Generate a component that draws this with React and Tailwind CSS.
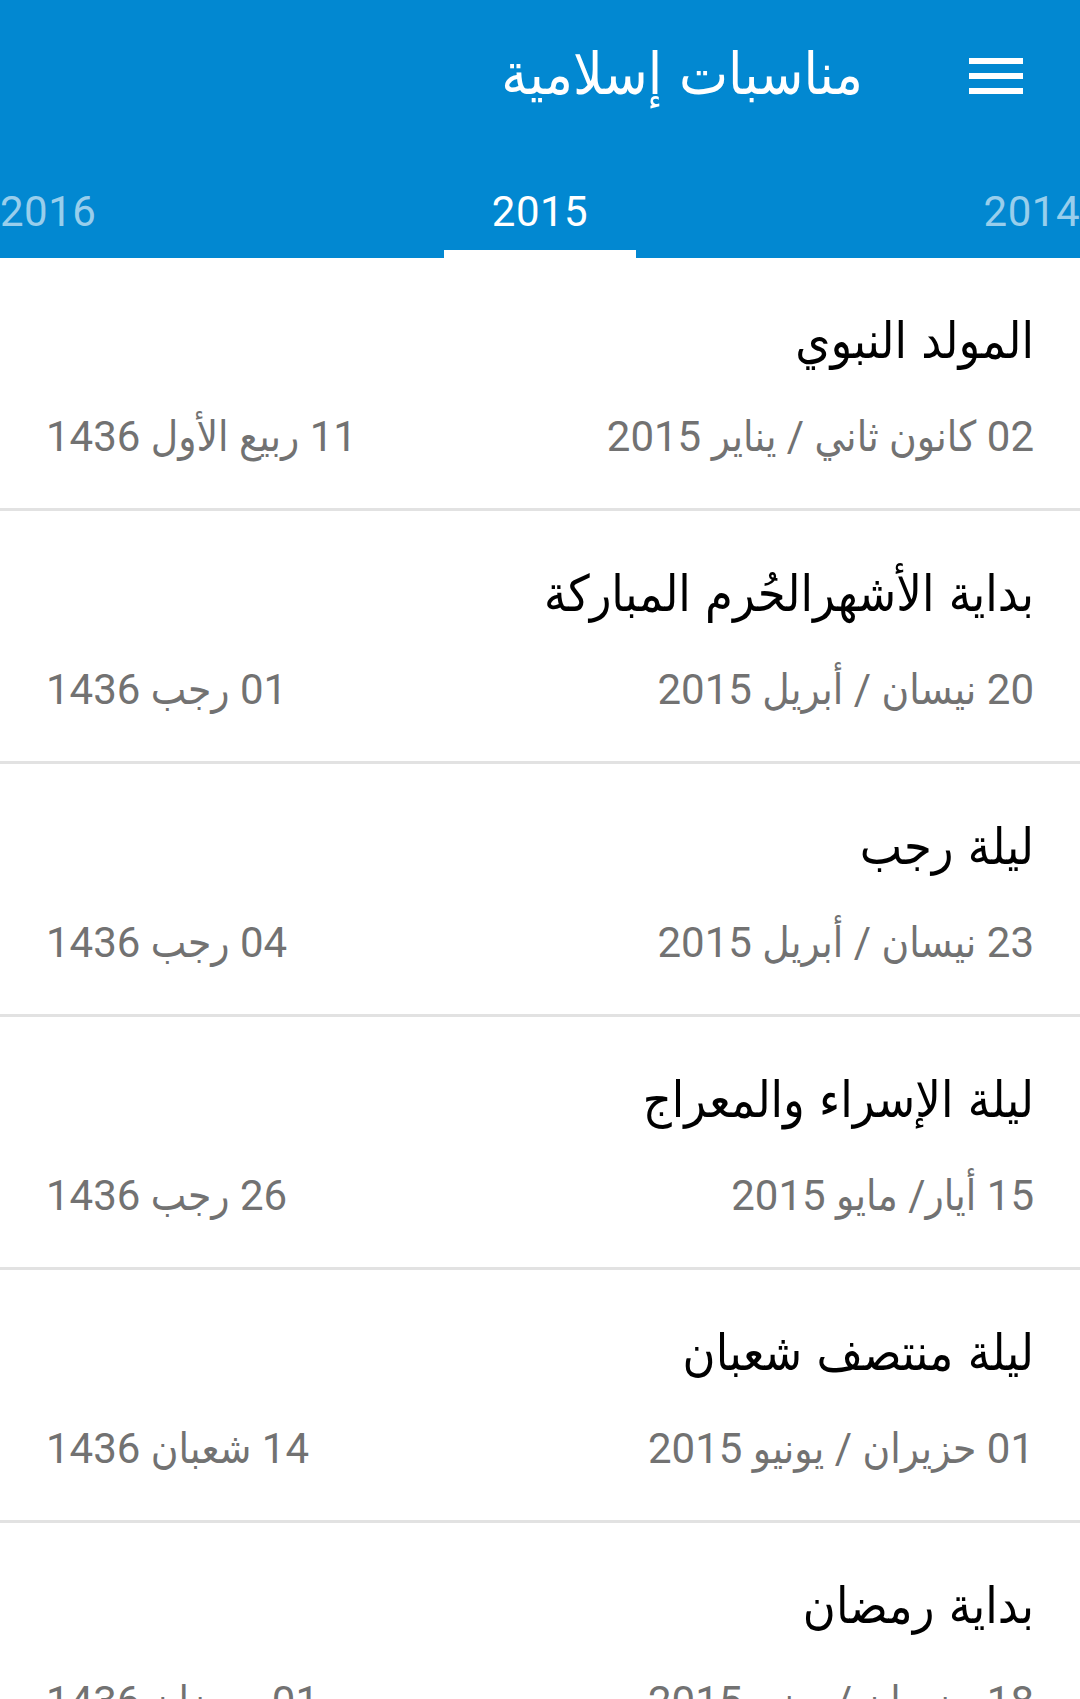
const events = [
  {
    title: "المولد النبوي",
    greg: "02 كانون ثاني / يناير 2015",
    hijri: "11 ربيع الأول 1436",
  },
  {
    title: "بداية الأشهرالحُرم المباركة",
    greg: "20 نيسان / أبريل 2015",
    hijri: "01 رجب 1436",
  },
  {
    title: "ليلة رجب",
    greg: "23 نيسان / أبريل 2015",
    hijri: "04 رجب 1436",
  },
  {
    title: "ليلة الإسراء والمعراج",
    greg: "15 أيار/ مايو 2015",
    hijri: "26 رجب 1436",
  },
  {
    title: "ليلة منتصف شعبان",
    greg: "01 حزيران / يونيو 2015",
    hijri: "14 شعبان 1436",
  },
  {
    title: "بداية رمضان",
    greg: "18 حزيران / يونيو 2015",
    hijri: "01 رمضان 1436",
  },
];

export default function App() {
  return (
    <div className="w-[1080px] h-[1699px] overflow-hidden bg-white font-['Roboto','DejaVu_Sans_Condensed','DejaVu_Sans',sans-serif]">
      {/* Header */}
      <header className="bg-[#0288d1] h-[258px] flex flex-col">
        <div dir="rtl" className="h-[152px] flex items-center">
          <button className="mr-[57px] w-[54px] h-[36px] flex flex-col justify-between">
            <span className="block h-[6px] w-full bg-white" />
            <span className="block h-[6px] w-full bg-white" />
            <span className="block h-[6px] w-full bg-white" />
          </button>
          <h1 className="mr-[106px] -mt-[4px] text-white text-[58px] leading-[70px] font-['DejaVu_Sans_Condensed','DejaVu_Sans',sans-serif]">
            مناسبات إسلامية
          </h1>
        </div>

        {/* Year tabs */}
        <div className="flex-1 flex justify-between items-end text-[42px] leading-[50px]">
          <div className="pb-[21px] text-white/60 tracking-[0.5px]">2016</div>
          <div className="w-[192px] flex flex-col items-center">
            <span className="text-white tracking-[0.5px]">2015</span>
            <span className="mt-[13px] h-[8px] w-full bg-white" />
          </div>
          <div className="pb-[21px] text-white/60 tracking-[0.5px]">2014</div>
        </div>
      </header>

      {/* Events list */}
      <ul>
        {events.map((ev, i) => (
          <li
            key={i}
            dir="rtl"
            className="h-[253px] border-b-[3px] border-[#e2e2e2] px-[46px] pt-[53px]"
          >
            <div className="h-[60px] text-[50px] leading-[60px] text-black font-['DejaVu_Sans_Condensed','DejaVu_Sans',sans-serif] whitespace-nowrap">
              {ev.title}
            </div>
            <div className="mt-[41px] flex justify-between text-[42px] leading-[50px] text-[#727272] whitespace-nowrap">
              <span>{ev.greg}</span>
              <span>{ev.hijri}</span>
            </div>
          </li>
        ))}
      </ul>
    </div>
  );
}
